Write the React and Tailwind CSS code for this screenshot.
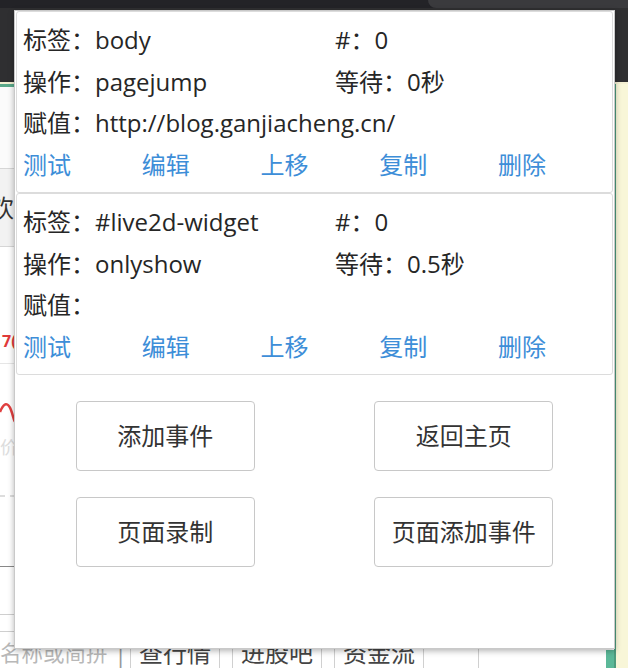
const events = [
    { tag: 'body', op: 'pagejump', wait: '0秒', value: 'http://blog.ganjiacheng.cn/' },
    { tag: '#live2d-widget', op: 'onlyshow', wait: '0.5秒', value: '' },
]

const actions = ['测试', '编辑', '上移', '复制', '删除']

const EventCard = ({ event }) => {
    return (
        <div className="rounded-[3px] border border-[#dcdcdc] px-[6px] py-[7px] leading-[41.5px]">
            <div className="flex">
                <div className="w-[312px] shrink-0">标签：{event.tag}</div>
                <div>#：0</div>
            </div>
            <div className="flex">
                <div className="w-[312px] shrink-0">操作：{event.op}</div>
                <div>等待：{event.wait}</div>
            </div>
            <div>赋值：{event.value}</div>
            <div className="flex text-[#3d8ed8]">
                {actions.map((a) => (
                    <span key={a} className="w-[118.75px] shrink-0 cursor-pointer">{a}</span>
                ))}
            </div>
        </div>
    )
}

const PageBehind = () => {
    return (
        <div className="flex h-full flex-col">
            {/* browser top bar */}
            <div className="flex h-[8px] bg-[#232327]">
                <div className="flex-1" />
                <div className="w-[200px] rounded-bl-[14px] bg-[#3a3a3d]" />
            </div>
            <div className="h-[74px] bg-[#2f2f31]" />
            <div className="h-[2px] bg-[#f3efd2]" />
            <div className="flex flex-1">
                <div className="flex min-w-0 flex-1 flex-col">
                    <div className="h-[3px] bg-[#5aa98a]" />
                    <div className="h-[82px] border-b border-[#d6d6d6] bg-[#fbfbfb]" />
                    <div className="flex h-[78px] items-center border-b border-[#d6d6d6] bg-[#f2f2f2] text-[24px] text-[#333]">
                        <span className="-ml-[10px]">欢</span>
                    </div>
                    <div className="relative h-[319px]">
                        <div className="pt-[82px] pl-[2px] text-[16px] font-bold leading-[24px] text-[#e03a3a]">7(</div>
                        <div className="mt-[10px] h-px bg-[#e6e6e6]" />
                        <svg width="40" height="160" className="mt-[36px]">
                            <path d="M0 12 C4 2 8 2 11 10 S14 24 16 20" fill="none" stroke="#e04040" strokeWidth="2.5" />
                            <text x="0" y="54" fontSize="18" fill="#ddd">价</text>
                            <line x1="0" y1="96" x2="40" y2="96" stroke="#bbb" strokeDasharray="5 5" />
                        </svg>
                    </div>
                    <div className="h-[48px] border-t border-[#888]" />
                    <div className="h-[17px] border-t border-[#cfcfcf]" />
                    <div className="flex flex-1 items-end whitespace-nowrap border-t border-[#cfcfcf] text-[24px] leading-[30px] text-[#444]">
                        <span className="w-[114px] shrink-0 text-[21.5px] text-[#b8b8b8]">名称或简拼</span>
                        <span className="w-[16px] shrink-0 text-[#999]">|</span>
                        <span className="mr-[12px] shrink-0 border-x border-[#d0d0d0] px-[8px]">查行情</span>
                        <span className="mr-[12px] shrink-0 border-x border-[#d0d0d0] px-[8px]">进股吧</span>
                        <span className="shrink-0 border-x border-[#d0d0d0] px-[8px]">资金流</span>
                        <span className="ml-[54px] h-full border-l border-[#d0d0d0]" />
                        <div className="flex-1" />
                        <div className="h-[18px] w-[8px] bg-[#5bb898]" />
                    </div>
                </div>
                <div className="w-[2px] bg-[#4e9c7e]" />
                <div className="w-[12px] bg-[#f8f6d8]" />
            </div>
        </div>
    )
}

export default function App() {
    return (
        <div className="relative h-[668px] w-[628px] overflow-hidden bg-white font-['Open_Sans','Noto_Sans_CJK_SC',sans-serif]">
            <PageBehind />

            {/* extension popup */}
            <div className="absolute left-[14px] top-[10px] h-[639px] w-[601px] border border-[#c9c9c9] bg-white px-px text-[24px] text-[#262626] shadow-[0_2px_6px_rgba(0,0,0,0.3)]">
                {events.map((e) => (
                    <EventCard key={e.tag} event={e} />
                ))}
                <div className="mt-[26px] grid grid-cols-2 justify-items-center gap-y-[26px] text-[#333]">
                    <button className="h-[70px] w-[179px] rounded-[4px] border-[1.5px] border-[#c8c8c8]">添加事件</button>
                    <button className="h-[70px] w-[179px] rounded-[4px] border-[1.5px] border-[#c8c8c8]">返回主页</button>
                    <button className="h-[70px] w-[179px] rounded-[4px] border-[1.5px] border-[#c8c8c8]">页面录制</button>
                    <button className="h-[70px] w-[179px] rounded-[4px] border-[1.5px] border-[#c8c8c8]">页面添加事件</button>
                </div>
            </div>
        </div>
    )
}
